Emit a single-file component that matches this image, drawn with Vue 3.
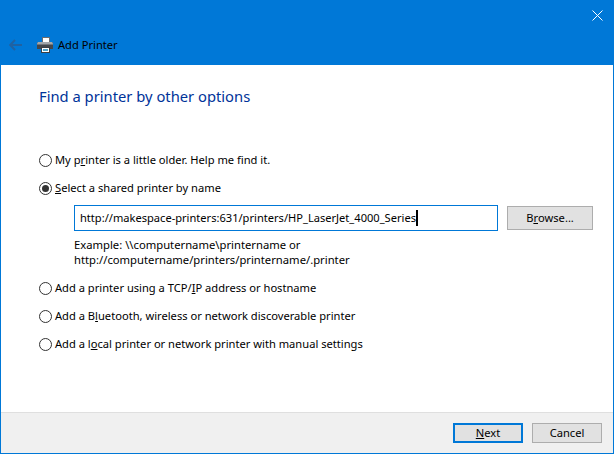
<script setup>
const options = [
  { before: 'My p', key: 'r', after: 'inter is a little older. Help me find it.', checked: false },
  { before: '', key: 'S', after: 'elect a shared printer by name', checked: true, detail: true },
  { before: 'Add a printer using a TCP/', key: 'I', after: 'P address or hostname', checked: false },
  { before: 'Add a B', key: 'l', after: 'uetooth, wireless or network discoverable printer', checked: false },
  { before: 'Add a l', key: 'o', after: 'cal printer or network printer with manual settings', checked: false }
]
</script>

<template>
  <div class="window">
    <header class="titlebar">
      <div class="close-row">
        <svg class="close" width="11" height="11" viewBox="0 0 11 11">
          <path d="M0.5 0.5 10.5 10.5M10.5 0.5 0.5 10.5" stroke="#fff" stroke-width="1" fill="none" />
        </svg>
      </div>
      <div class="nav-row">
        <svg class="back" width="13" height="12" viewBox="0 0 13 12">
          <path d="M6 1 1.2 6l4.8 5M1.2 6H13" stroke="#1f62a3" stroke-width="2" fill="none" />
        </svg>
        <svg class="printer" width="16" height="16" viewBox="0 0 16 16">
          <rect x="5.5" y="0.5" width="7" height="5" fill="#fff" stroke="#6a6d70" />
          <path d="M0 6.5 1 5h14l1 1.5V12H0z" fill="#44474b" />
          <path d="M1 5h14l1 1.5v1H0v-1z" fill="#a3a6a9" />
          <rect x="4.5" y="10.5" width="8" height="5" fill="#fff" stroke="#3c3f43" />
          <rect x="6" y="12" width="5" height="2" fill="#4da3c9" />
        </svg>
        <span class="title">Add Printer</span>
      </div>
    </header>

    <main class="content">
      <h1 class="heading">Find a printer by other options</h1>
      <div class="options">
        <template v-for="o in options" :key="o.after">
          <div class="option">
            <span class="radio" :class="{ on: o.checked }"></span>
            <span>{{ o.before }}<u>{{ o.key }}</u>{{ o.after }}</span>
          </div>
          <div v-if="o.detail" class="detail">
            <div class="input-row">
              <div class="input">
                <span>http://makespace-printers:631/printers/HP_LaserJet_4000_Series</span><i class="caret"></i>
              </div>
              <div class="btn browse">B<u>r</u>owse...</div>
            </div>
            <p class="example">Example: \\computername\printername or<br />http://computername/printers/printername/.printer</p>
          </div>
        </template>
      </div>
    </main>

    <footer class="footer">
      <div class="btn wide primary"><u>N</u>ext</div>
      <div class="btn wide">Cancel</div>
    </footer>
  </div>
</template>

<style>
html, body { margin: 0; padding: 0; background: #fff; }
</style>

<style scoped>
.window {
  width: 614px;
  height: 454px;
  box-sizing: border-box;
  display: flex;
  flex-direction: column;
  background: #fff;
  border: 1px solid #0078d7;
  border-top: 0;
  font: 11.15px/16px "Noto Sans", "Open Sans", sans-serif;
  color: #000;
  overflow: hidden;
}
.titlebar { height: 65px; background: #0078d7; flex: none; }
.close-row { height: 30px; display: flex; justify-content: flex-end; align-items: flex-start; }
.close { margin: 10px 10px 0 0; }
.nav-row { display: flex; align-items: center; height: 30px; }
.back { margin-left: 8px; flex: none; }
.printer { margin-left: 15px; flex: none; }
.title { margin-left: 5px; }
.content { flex: 1; padding: 21px 0 0 38px; }
.heading { margin: 0; font-size: 14.75px; line-height: 20px; font-weight: 400; color: #003399; }
.options { margin-top: 46px; }
.option { display: flex; align-items: center; height: 16px; margin-bottom: 12px; gap: 3px; }
.radio {
  width: 13px; height: 13px; box-sizing: border-box; border: 1px solid #333; border-radius: 50%;
  background: #fff; display: flex; align-items: center; justify-content: center; flex: none;
}
.radio.on::after { content: ""; width: 7px; height: 7px; border-radius: 50%; background: #333; }
.detail { margin: -3px 0 0 35px; }
.input-row { display: flex; gap: 9px; align-items: center; }
.input {
  width: 424px; height: 26px; box-sizing: border-box; border: 1px solid #0078d7;
  padding-left: 5px; display: flex; align-items: center; white-space: nowrap; font-size: 11.1px;
}
.caret { width: 2px; height: 16px; background: #000; flex: none; }
.btn {
  box-sizing: border-box; background: #e1e1e1; border: 1px solid #adadad;
  display: flex; align-items: center; justify-content: center;
}
.browse { width: 86px; height: 24px; }
.example { margin: 6px 0 13px; line-height: 15px; font-size: 11.25px; }
.footer {
  height: 41px; flex: none; box-sizing: border-box; background: #f0f0f0; border-top: 1px solid #dfdfdf;
  display: flex; justify-content: flex-end; gap: 9px; padding: 10px 11px 0 0;
}
.wide { width: 70px; height: 20px; }
.primary { border: 2px solid #0078d7; }
</style>
